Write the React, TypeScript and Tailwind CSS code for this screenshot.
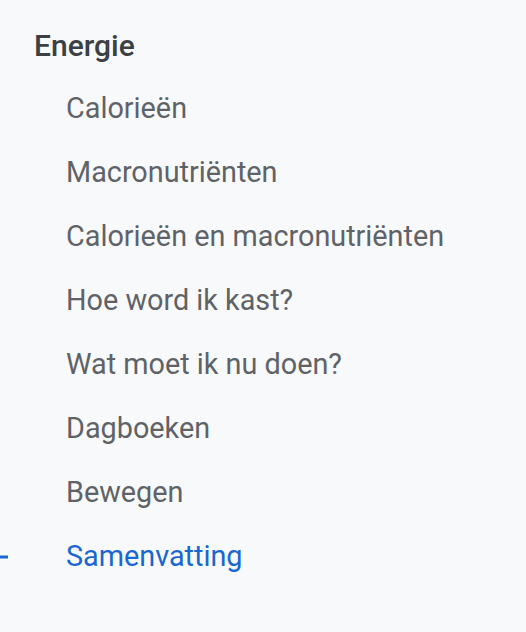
const items = [
  "Calorieën",
  "Macronutriënten",
  "Calorieën en macronutriënten",
  "Hoe word ik kast?",
  "Wat moet ik nu doen?",
  "Dagboeken",
  "Bewegen",
  "Samenvatting",
]

export default function App() {
  const active = "Samenvatting"
  return (
    <div className="h-[632px] w-[526px] bg-[#f8f9fa] font-['Roboto',sans-serif] overflow-hidden">
      <nav className="pt-[21px]">
        <div className="h-12 flex items-center pl-[34px] text-[30px] font-medium text-[#3c4043]">
          Energie
        </div>
        <ul className="mt-[8px]">
          {items.map((item) => (
            <li
              key={item}
              className={`relative h-16 flex items-center pl-[66px] text-[28.8px] ${
                item === active ? "text-[#1967d2]" : "text-[#5f6368]"
              }`}
            >
              {item === active && (
                <span className="absolute left-0 top-1/2 -translate-y-1/2 w-2 h-[3px] bg-[#1967d2]" />
              )}
              {item}
            </li>
          ))}
        </ul>
      </nav>
    </div>
  )
}
